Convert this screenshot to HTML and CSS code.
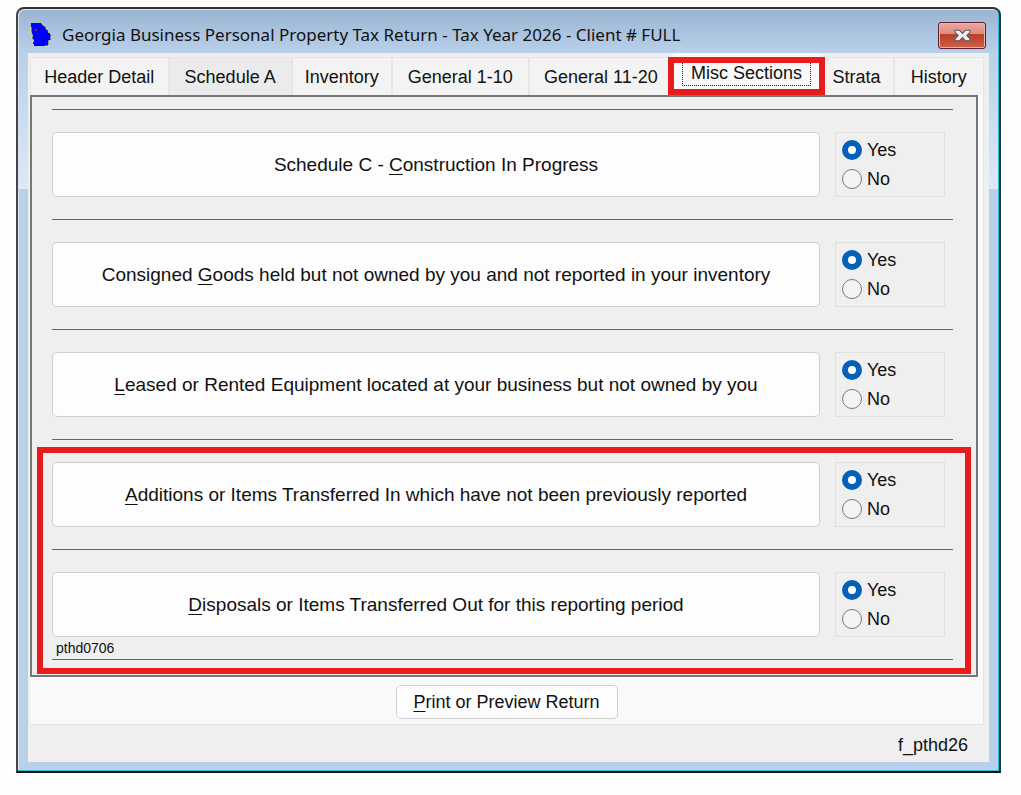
FILE: index.html
```html
<!DOCTYPE html>
<html lang="en">
<head>
<meta charset="utf-8">
<meta name="viewport" content="width=device-width, initial-scale=1">
<title>Georgia Business Personal Property Tax Return</title>
<link rel="stylesheet" href="styles.css">
</head>
<body>
<main class="window">
  <header class="titlebar">
    <svg class="app-icon" viewBox="0 0 22 24" aria-hidden="true">
      <path d="M1 0h10l2 2 3 3 3 4 2 4v3l-2 2-1 4-1 1H4l-1-3 1-3-2-2 1-3-2-3z" fill="#0000ff"/>
      <path d="M1 4v7M2 13v2M3 17v2M3 21v2M12 0l2 3M16 5l1 2M18 8l1 2M21 13v3M19 17v3M16 22v2" fill="none" stroke="#f4f020" stroke-width="1"/>
      <rect x="5" y="6" width="2" height="2" fill="#c01040"/>
    </svg>
    <h1 class="title">Georgia Business Personal Property Tax Return - Tax Year 2026 - Client # FULL</h1>
    <button class="close" type="button" aria-label="Close">
      <svg class="close-icon" viewBox="0 0 16 12" aria-hidden="true">
        <path d="M1 1h4l3 3 3-3h4v2l-3 3 3 3v2h-4L8 8l-3 3H1V9l3-3-3-3z" fill="#f5f5f5" stroke="#56596b" stroke-width="1"/>
      </svg>
    </button>
  </header>

  <div class="client">
    <nav class="tabs" role="tablist" aria-label="Return sections">
      <button class="tab tab-header" type="button" role="tab">Header Detail</button>
      <button class="tab tab-schedule hover" type="button" role="tab">Schedule A</button>
      <button class="tab tab-inventory" type="button" role="tab">Inventory</button>
      <button class="tab tab-general" type="button" role="tab">General 1-10</button>
      <button class="tab tab-general-more" type="button" role="tab">General 11-20</button>
      <button class="tab tab-misc active" type="button" role="tab" aria-selected="true"><span class="focus">Misc Sections</span></button>
      <button class="tab tab-strata" type="button" role="tab">Strata</button>
      <button class="tab tab-history" type="button" role="tab">History</button>
    </nav>

    <div class="sheet">
      <section class="panel" role="tabpanel">
        <div class="row">
          <button class="section-button" type="button">Schedule C - <u>C</u>onstruction In Progress</button>
          <div class="choice" role="radiogroup" aria-label="Construction In Progress">
            <label class="option"><input class="radio" type="radio" name="construction" checked>Yes</label>
            <label class="option"><input class="radio" type="radio" name="construction">No</label>
          </div>
        </div>
        <div class="row">
          <button class="section-button" type="button">Consigned <u>G</u>oods held but not owned by you and not reported in your inventory</button>
          <div class="choice" role="radiogroup" aria-label="Consigned Goods">
            <label class="option"><input class="radio" type="radio" name="consigned" checked>Yes</label>
            <label class="option"><input class="radio" type="radio" name="consigned">No</label>
          </div>
        </div>
        <div class="row">
          <button class="section-button" type="button"><u>L</u>eased or Rented Equipment located at your business but not owned by you</button>
          <div class="choice" role="radiogroup" aria-label="Leased Equipment">
            <label class="option"><input class="radio" type="radio" name="leased" checked>Yes</label>
            <label class="option"><input class="radio" type="radio" name="leased">No</label>
          </div>
        </div>
        <div class="marked">
          <div class="row">
            <button class="section-button" type="button"><u>A</u>dditions or Items Transferred In which have not been previously reported</button>
            <div class="choice" role="radiogroup" aria-label="Additions">
              <label class="option"><input class="radio" type="radio" name="additions" checked>Yes</label>
              <label class="option"><input class="radio" type="radio" name="additions">No</label>
            </div>
          </div>
          <div class="row last">
            <button class="section-button" type="button"><u>D</u>isposals or Items Transferred Out for this reporting period</button>
            <div class="choice" role="radiogroup" aria-label="Disposals">
              <label class="option"><input class="radio" type="radio" name="disposals" checked>Yes</label>
              <label class="option"><input class="radio" type="radio" name="disposals">No</label>
            </div>
            <span class="note">pthd0706</span>
          </div>
        </div>
      </section>
      <div class="actions">
        <button class="print-button" type="button"><u>P</u>rint or Preview Return</button>
      </div>
    </div>

    <footer class="status">f_pthd26</footer>
  </div>
</main>
</body>
</html>
```
FILE: styles.css
```css
* {
  box-sizing: border-box;
}

body {
  margin: 0;
  padding: 7px 20px 20px 16px;
  background: #fefefe;
  color: #111;
  font-family: "Liberation Sans", Arial, sans-serif;
  font-size: 18px;
  line-height: 20px;
}

button {
  margin: 0;
  padding: 0;
  color: inherit;
  font: inherit;
}

u {
  text-decoration-thickness: 1px;
  text-underline-offset: 3px;
}

/* Window frame */
.window {
  padding: 0 10px 9px;
  border: 2px solid #222;
  border-color: #333 #103c48 #111 #444;
  border-radius: 8px 8px 0 0;
  background:
    linear-gradient(#9ab4d1, #b9d0ea) 0 0 / 100% 44px no-repeat,
    linear-gradient(#b9d0ea, #dce9f6) 0 44px / 100% 136px no-repeat,
    #b9d0ea;
  box-shadow: inset -1px -1px 0 #35bcd6, inset 1px 1px 0 #dbe6f2;
}

.titlebar {
  display: flex;
  align-items: center;
  height: 44px;
  padding: 8px 3px 0 2px;
}

.app-icon {
  width: 22px;
  height: 24px;
}

.title {
  flex: 1;
  margin: 0 0 0 10px;
  font-family: "Noto Sans", "Open Sans", sans-serif;
  font-size: 17px;
  font-weight: 400;
  line-height: 24px;
  white-space: nowrap;
}

.close {
  display: flex;
  align-items: center;
  justify-content: center;
  width: 48px;
  height: 27px;
  border: 1px solid #5c2030;
  border-radius: 3px;
  background: linear-gradient(#e8aaa0, #dc8a7c 45%, #b93f26 46%, #d0604a);
  box-shadow: inset 0 0 0 1px #e9b3aa;
}

.close-icon {
  width: 17px;
  height: 13px;
}

.client {
  padding: 0 5px 0 2px;
  background: #efefef;
}

/* Tabs */
.tabs {
  display: flex;
  align-items: flex-end;
  height: 42px;
  padding-top: 4px;
}

.tab {
  height: 38px;
  border: 1px solid #e6e6e6;
  border-bottom: 0;
  background: #f3f3f3;
  white-space: nowrap;
}

.hover {
  background: #ebebeb;
}

.tab-header { flex: 139 0 0; }
.tab-schedule { flex: 123 0 0; }
.tab-inventory { flex: 100 0 0; }
.tab-general { flex: 137 0 0; }
.tab-general-more { flex: 145 0 0; }
.tab-misc { flex: 147 0 0; }
.tab-strata { flex: 73 0 0; }
.tab-history { flex: 90 0 0; }

.active {
  position: relative;
  z-index: 1;
  height: 42px;
  border-color: #f9f9f9;
  background: #f9f9f9;
}

.active::after {
  content: "";
  position: absolute;
  inset: 3px -6px 0 -6px;
  border: 6px solid #e81c1c;
}

.focus {
  display: inline-block;
  padding: 0 8px 2px;
  border: 1px dotted #222;
  border-top: 0;
}

/* Sheet */
.sheet {
  padding-right: 5px;
  border: solid #e4e4e4;
  border-width: 0 1px 1px 0;
  background: #f9f9f9;
}

.panel {
  padding: 12px 23px 15px 20px;
  border: 2px solid #777;
  background: #efefef;
}

.row {
  display: grid;
  grid-template-columns: 1fr 110px;
  grid-template-rows: 65px 22px;
  column-gap: 15px;
  padding: 22px 8px 0 0;
  border-top: 1px solid #666;
}

.last {
  border-bottom: 1px solid #666;
}

.section-button {
  border: 1px solid #cfcfcf;
  border-radius: 5px;
  background: #fdfdfd;
  font-size: 19px;
}

.choice {
  display: flex;
  flex-direction: column;
  gap: 9px;
  padding: 7px 6px;
  border: 1px solid #dfdfdf;
}

.option {
  display: flex;
  align-items: center;
  gap: 5px;
}

.radio {
  appearance: none;
  width: 20px;
  height: 20px;
  margin: 0;
  border: 1px solid #777;
  border-radius: 50%;
  background: #f4f4f4;
}

.radio:checked {
  border: 6px solid #0560b8;
  background: #fff;
}

.note {
  padding-left: 4px;
  font-size: 14px;
  line-height: 22px;
}

.marked {
  position: relative;
}

.marked::after {
  content: "";
  position: absolute;
  inset: 8px -18px -14px -15px;
  border: 6px solid #e81c1c;
  pointer-events: none;
}

.actions {
  display: flex;
  justify-content: center;
  padding: 8px 0 5px 5px;
}

.print-button {
  width: 222px;
  height: 34px;
  border: 1px solid #cfcfcf;
  border-radius: 5px;
  background: #fdfdfd;
}

.status {
  padding: 10px 16px 7px;
  text-align: right;
}
```
